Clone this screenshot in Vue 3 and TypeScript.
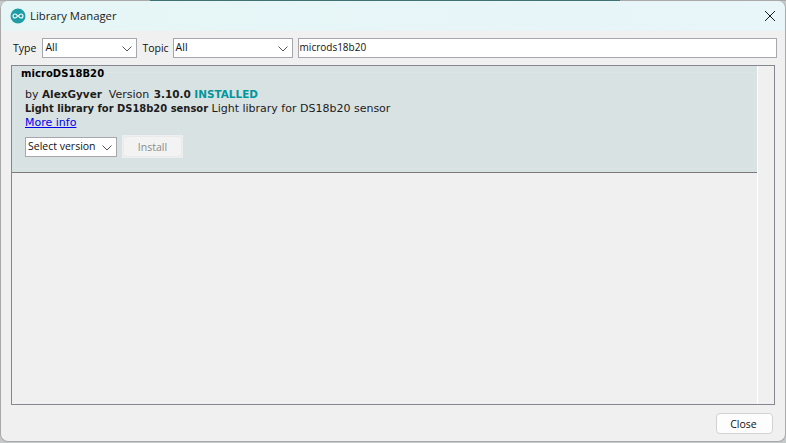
<script setup lang="ts">
const title = 'Library Manager'
</script>

<template>
  <div class="desktop">
    <div class="window">
      <header class="titlebar">
        <svg class="logo" width="16" height="16" viewBox="0 0 16 16">
          <circle cx="8" cy="8" r="7.5" fill="#1e9ea4" />
          <path d="M7.6 8c-1-1.6-1.7-2-2.6-2a2 2 0 0 0 0 4c.9 0 1.6-.4 2.6-2zm.8 0c1 1.6 1.7 2 2.6 2a2 2 0 0 0 0-4c-.9 0-1.6.4-2.6 2z" fill="none" stroke="#fff" stroke-width="1.1" />
        </svg>
        <span class="title">{{ title }}</span>
        <svg class="close-x" width="12" height="12" viewBox="0 0 12 12">
          <path d="M1 1l10 10M11 1L1 11" stroke="#1a1a1a" stroke-width="1" fill="none" />
        </svg>
      </header>

      <div class="filters">
        <label class="lbl">Type</label>
        <div class="combo type">All<svg class="chev" width="10" height="6" viewBox="0 0 10 6"><path d="M.5.5 5 5 9.5.5" stroke="#555" fill="none" /></svg></div>
        <label class="lbl">Topic</label>
        <div class="combo topic">All<svg class="chev" width="10" height="6" viewBox="0 0 10 6"><path d="M.5.5 5 5 9.5.5" stroke="#555" fill="none" /></svg></div>
        <div class="search">microds18b20</div>
      </div>

      <main class="listbox">
        <div class="list">
          <section class="item">
            <h3 class="name">microDS18B20</h3>
            <p class="line"><span>by </span><b>AlexGyver</b><span>&nbsp; Version </span><b class="ver">3.10.0</b> <b class="installed">INSTALLED</b></p>
            <p class="line"><b class="summary">Light library for DS18b20 sensor</b> Light library for DS18b20 sensor</p>
            <p class="line"><a class="more">More info</a></p>
            <div class="actions">
              <div class="combo version">Select version<svg class="chev" width="10" height="6" viewBox="0 0 10 6"><path d="M.5.5 5 5 9.5.5" stroke="#555" fill="none" /></svg></div>
              <div class="install-wrap"><button class="install" disabled>Install</button></div>
            </div>
          </section>
        </div>
        <div class="scrolltrack"></div>
      </main>

      <footer class="footer">
        <button class="close-btn">Close</button>
      </footer>
    </div>
  </div>
</template>

<style>
html, body { margin: 0; background: #c4caca; overflow: hidden; }
</style>

<style scoped>
.desktop {
  width: 786px;
  height: 443px;
  box-sizing: border-box;
  padding: 1px 0 1px 0;
  font-family: "Liberation Sans", Arial, sans-serif;
  background:
    linear-gradient(90deg, #a9a9a9 0 150px, #3f7273 150px 620px, #a9a9a9 620px) top / 100% 1px no-repeat,
    #c4caca;
}
.window {
  box-sizing: border-box;
  width: 786px;
  height: 441px;
  display: flex;
  flex-direction: column;
  background: #f0f0f0;
  border: 1px solid #a9a9a9;
  border-top: 0;
  border-radius: 8px;
  overflow: hidden;
}
.titlebar {
  height: 30px;
  flex: none;
  display: flex;
  align-items: center;
  padding: 0 9px 0 9px;
  background: linear-gradient(90deg, #e6f6f6, #e8f5f9);
}
.logo { flex: none; margin-right: 4px; }
.title { font: 11.3px "Open Sans", sans-serif; color: #1a1a1a; flex: 1; padding-bottom: 2px; }
.close-x { flex: none; }
.filters {
  height: 27px;
  box-sizing: border-box;
  flex: none;
  display: flex;
  align-items: flex-start;
  padding: 7px 8px 0 12px;
  font: 10.5px "Open Sans", sans-serif;
  color: #111;
}
.lbl { line-height: 20px; }
.combo {
  box-sizing: border-box;
  position: relative;
  height: 20px;
  line-height: 17px;
  background: #fff;
  border: 1px solid #a6a6ad;
  padding-left: 2px;
}
.chev { position: absolute; right: 4px; top: 7px; }
.type { width: 95px; margin-left: 6px; margin-right: 5px; }
.topic { width: 120px; margin-left: 4px; margin-right: 5px; }
.search {
  box-sizing: border-box;
  flex: 1;
  height: 20px;
  line-height: 17px;
  background: #fff;
  border: 1px solid #a6a6ad;
  padding-left: 1px;
  font-size: 10px;
}
.listbox {
  flex: none;
  box-sizing: border-box;
  height: 340px;
  margin: 7px 10px 0 10px;
  border: 1px solid #868690;
  display: flex;
}
.list { flex: 1; min-width: 0; }
.scrolltrack { width: 16px; flex: none; border-left: 1px solid #fff; }
.item {
  position: relative;
  box-sizing: border-box;
  height: 107px;
  padding: 1px 0 0 13px;
  background: #d9e2e3;
  border-bottom: 1px solid #7a7a7a;
  font: 11px "DejaVu Sans", sans-serif;
  color: #1c1c1c;
}
.item::before {
  content: "";
  position: absolute;
  left: 2px;
  right: 2px;
  top: 6px;
  bottom: 3px;
  border: 1px solid #dde5e5;
  pointer-events: none;
}
.name {
  position: relative;
  margin: 0 0 0 -4px;
  font: bold 10px/13px "DejaVu Sans", sans-serif;
  letter-spacing: 0.05px;
  color: #000;
}
.line { position: relative; margin: 0; line-height: 14px; white-space: pre; }
.line b { font-size: 10.45px; }
.line b.summary { font-size: 9.95px; }
.line b.ver { margin-left: 1px; }
.name + .line { margin-top: 7px; }
.installed { color: #00979d; }
.more { color: #0000ee; text-decoration: underline; }
.actions { position: relative; display: flex; align-items: center; margin-top: 5px; }
.version { width: 92px; height: 20px; font: 10.5px/17px "Open Sans", sans-serif; color: #111; }
.install-wrap { margin-left: 5px; background: #eef0f0; padding: 1px; }
.install {
  display: block;
  width: 59px;
  height: 21px;
  padding: 0;
  border: 1px solid #eaeaea;
  border-radius: 4px;
  background: #f3f3f3;
  color: #8a8a8a;
  font: 10.5px "Open Sans", sans-serif;
}
.footer {
  flex: 1;
  display: flex;
  justify-content: flex-end;
  align-items: flex-start;
  padding: 8px 12px 0 0;
}
.close-btn {
  box-sizing: border-box;
  width: 57px;
  height: 21px;
  padding: 0 2px 0 0;
  background: #fdfdfd;
  border: 1px solid #d2d2d2;
  border-radius: 4px;
  font: 10.5px "Open Sans", sans-serif;
  color: #111;
}
</style>
